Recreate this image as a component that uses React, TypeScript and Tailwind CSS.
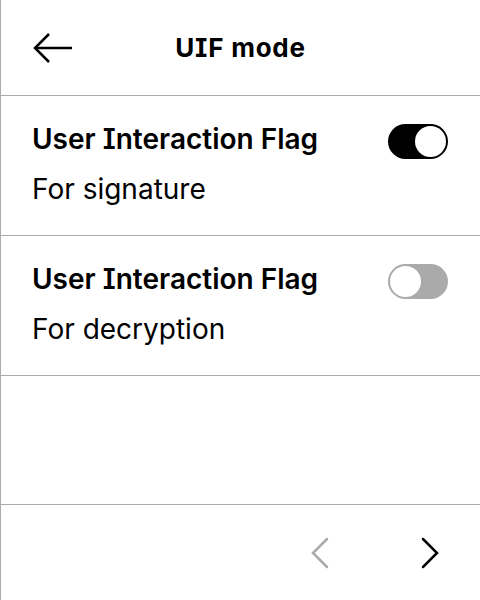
import React, { useState } from 'react';

const font = { fontFamily: 'Inter, "Noto Sans", sans-serif' };

const Toggle: React.FC<{ on: boolean; onClick: () => void }> = ({ on, onClick }) => (
    <button
        onClick={onClick}
        className={`relative mt-[3px] w-[60px] h-[35px] rounded-full shrink-0 ${on ? 'bg-black' : 'bg-[#aaaaaa]'}`}
    >
        <span
            className={`absolute top-[2px] w-[31px] h-[31px] rounded-full bg-white ${on ? 'right-[2px]' : 'left-[2px]'}`}
        />
    </button>
);

const Row: React.FC<{ title: string; sub: string; on: boolean; onClick: () => void }> = ({ title, sub, on, onClick }) => (
    <div className="h-[140px] border-b border-[#aaaaaa] pl-[31px] pr-[32px] pt-[25px]">
        <div className="flex items-start justify-between">
            <span className="text-[28px] font-semibold text-black leading-[36px]">{title}</span>
            <Toggle on={on} onClick={onClick} />
        </div>
        <div className="text-[28px] text-black leading-[36px] mt-[12px]">{sub}</div>
    </div>
);

export default function App() {
    const [sig, setSig] = useState(true);
    const [dec, setDec] = useState(false);

    return (
        <div style={font} className="w-[480px] h-[600px] bg-white border-l border-[#aaaaaa] flex flex-col overflow-hidden [font-feature-settings:'cv08']">
            <div className="h-[96px] shrink-0 border-b border-[#aaaaaa] relative flex items-center justify-center">
                <svg className="absolute left-[32px] top-[32px]" width="40" height="32" viewBox="0 0 40 32" fill="none" stroke="black" strokeWidth="2.5">
                    <path d="M39 16H3" />
                    <path d="M16 2L2 16l14 14" />
                </svg>
                <span className="text-[26px] font-bold text-black tracking-[0.03em] leading-[32px]">UIF mode</span>
            </div>
            <Row title="User Interaction Flag" sub="For signature" on={sig} onClick={() => setSig(!sig)} />
            <Row title="User Interaction Flag" sub="For decryption" on={dec} onClick={() => setDec(!dec)} />
            <div className="flex-1 border-b border-[#aaaaaa]" />
            <div className="h-[95px] shrink-0 flex items-center justify-end gap-[90px] pr-[40px]">
                <svg width="20" height="32" viewBox="0 0 20 32" fill="none" stroke="#aaaaaa" strokeWidth="2.5" strokeLinecap="round">
                    <path d="M17 2L3 16l14 14" />
                </svg>
                <svg width="20" height="32" viewBox="0 0 20 32" fill="none" stroke="black" strokeWidth="2.5" strokeLinecap="round">
                    <path d="M3 2l14 14L3 30" />
                </svg>
            </div>
        </div>
    );
}
